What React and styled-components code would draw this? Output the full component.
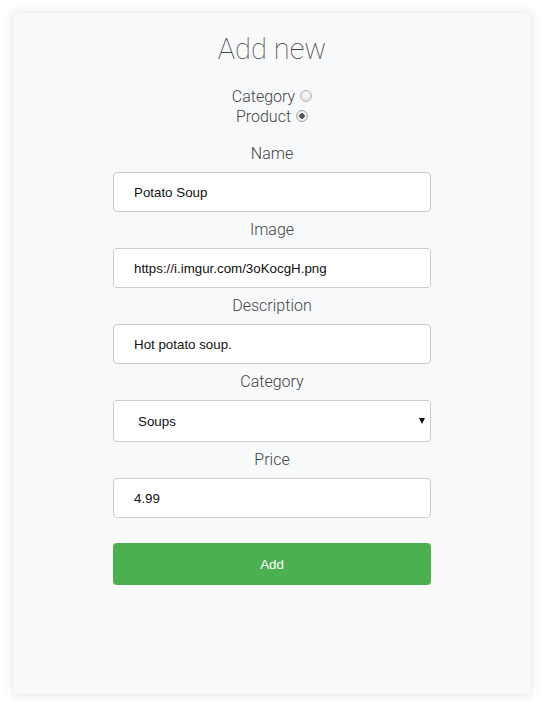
import styled, { createGlobalStyle } from 'styled-components';

const GlobalStyle = createGlobalStyle`
  html, body {
    margin: 0;
    padding: 0;
    background: #ffffff;
  }
  * {
    box-sizing: border-box;
  }
`;

const Card = styled.div`
  margin: 13px;
  width: 518px;
  height: 681px;
  background: #f8f9fa;
  box-shadow: 0 0 10px rgba(0, 0, 0, 0.13);
  padding-top: 18px;
  display: flex;
  flex-direction: column;
  align-items: center;
  font-family: Roboto, 'Liberation Sans', sans-serif;
  color: #444;
`;

const Title = styled.h1`
  margin: 0;
  font-size: 29px;
  font-weight: 100;
  line-height: 36px;
  color: #444;
`;

const TypeChoice = styled.div`
  margin-top: 20px;
  display: flex;
  flex-direction: column;
  align-items: center;
`;

const ChoiceRow = styled.label`
  display: flex;
  align-items: center;
  gap: 5px;
  font-size: 16px;
  font-weight: 300;
  line-height: 20px;
`;

const Radio = styled.input.attrs({ type: 'radio' })`
  appearance: none;
  margin: 0;
  width: 12px;
  height: 12px;
  border-radius: 50%;
  border: 1px solid #b4b4b4;
  background: radial-gradient(circle at 50% 35%, #fafafa, #dcdcdc);
  position: relative;
  top: -1px;

  &:checked {
    background: radial-gradient(circle, #555 0 2.5px, #f4f4f4 3px, #e2e2e2 100%);
    border-color: #a8a8a8;
  }
`;

const Form = styled.form`
  margin-top: 9px;
  width: 318px;
  display: flex;
  flex-direction: column;
`;

const Label = styled.label`
  display: block;
  text-align: center;
  font-size: 16px;
  font-weight: 300;
  line-height: 24px;
  margin: 6px 0;
  color: #444;
`;

const TextInput = styled.input`
  width: 100%;
  height: 40px;
  border: 1px solid #ccc;
  border-radius: 4px;
  background: #fff;
  padding: 0 20px;
  font-family: 'Liberation Sans', Arial, sans-serif;
  font-size: 13.33px;
  color: #111;
  outline: none;
`;

const SelectWrap = styled.div`
  position: relative;
`;

const Select = styled.select`
  appearance: none;
  width: 100%;
  height: 42px;
  border: 1px solid #ccc;
  border-radius: 4px;
  background: #fff;
  padding: 0 24px;
  font-family: 'Liberation Sans', Arial, sans-serif;
  font-size: 13.33px;
  color: #111;
  outline: none;
`;

const Caret = styled.span`
  position: absolute;
  right: 6px;
  top: 18px;
  width: 0;
  height: 0;
  border-left: 3.5px solid transparent;
  border-right: 3.5px solid transparent;
  border-top: 6px solid #111;
  pointer-events: none;
`;

const AddButton = styled.button`
  margin-top: 25px;
  height: 42px;
  width: 100%;
  border: none;
  border-radius: 4px;
  background: #4caf50;
  color: #fff;
  font-family: 'Liberation Sans', Arial, sans-serif;
  font-size: 13.33px;
  cursor: pointer;
`;

const fields = [
  { label: 'Name', value: 'Potato Soup' },
  { label: 'Image', value: 'https://i.imgur.com/3oKocgH.png' },
  { label: 'Description', value: 'Hot potato soup.' },
];

export default function App() {
  return (
    <>
      <GlobalStyle />
      <Card>
        <Title>Add new</Title>
        <TypeChoice>
          <ChoiceRow>
            Category <Radio name="kind" />
          </ChoiceRow>
          <ChoiceRow>
            Product <Radio name="kind" defaultChecked />
          </ChoiceRow>
        </TypeChoice>
        <Form onSubmit={(e) => e.preventDefault()}>
          {fields.map((f) => (
            <div key={f.label}>
              <Label>{f.label}</Label>
              <TextInput defaultValue={f.value} />
            </div>
          ))}
          <div>
            <Label>Category</Label>
            <SelectWrap>
              <Select defaultValue="soups">
                <option value="soups">Soups</option>
              </Select>
              <Caret />
            </SelectWrap>
          </div>
          <div>
            <Label>Price</Label>
            <TextInput defaultValue="4.99" />
          </div>
          <AddButton type="submit">Add</AddButton>
        </Form>
      </Card>
    </>
  );
}
